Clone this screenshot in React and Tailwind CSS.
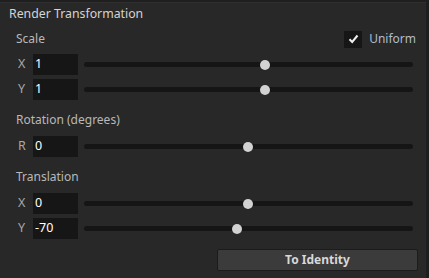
import React from "react";

function Slider({ pos }) {
  return (
    <div className="relative ml-[6px] mr-[16px] h-[21px] flex-1">
      <div className="absolute left-0 right-0 top-[8px] h-[5px] rounded-full bg-[#151515]" />
      <div
        className="absolute top-[6px] h-[10px] w-[10px] -translate-x-1/2 rounded-full bg-[#d2d2d2]"
        style={{ left: `${pos}px` }}
      />
    </div>
  );
}

function Row({ label, value, pos }) {
  return (
    <div className="flex h-[21px] items-center">
      <span className="w-[33px] pl-[18px] text-[12.5px] text-[#a8a8a8]">{label}</span>
      <div className="flex h-[21px] w-[45px] items-center bg-[#161616] pl-[2px] text-[12.5px] text-white">{value}</div>
      <Slider pos={pos} />
    </div>
  );
}

export default function App() {
  return (
    <div
      className="relative h-[278px] w-[429px] overflow-hidden bg-[#282828] text-[#c8c8c8]"
      style={{ fontFamily: "'Noto Sans', 'Open Sans', sans-serif" }}
    >
      <div className="h-[3px] border-b border-[#2f2f2f] bg-[#1f1f1f]" />
      <div className="absolute right-0 top-0 h-full w-[3px] bg-[#1e1e1e]" />

      <div className="pl-[9px] pt-[2px] text-[12.3px] leading-[18px] text-[#d4d4d4]">Render Transformation</div>

      <div className="mt-[7px] flex h-[18px] items-center justify-between pl-[16px] pr-[13px]">
        <span className="text-[12px] text-[#b8b8b8]">Scale</span>
        <div className="flex items-center gap-[7px]">
          <div className="flex h-[17px] w-[18px] items-center justify-center bg-[#161616]">
            <svg width="11" height="10" viewBox="0 0 11 10">
              <path d="M1.5 5.2 L4.2 8 L9.5 1.5" fill="none" stroke="#f0f0f0" strokeWidth="2" />
            </svg>
          </div>
          <span className="text-[12px] text-[#b0bcc8]">Uniform</span>
        </div>
      </div>

      <div className="mt-[6px] flex flex-col gap-[4px]">
        <Row label="X" value="1" pos={181} />
        <Row label="Y" value="1" pos={181} />
      </div>

      <div className="mt-[11px] flex h-[18px] items-center pl-[16px] text-[12px] text-[#b8b8b8]">Rotation (degrees)</div>
      <div className="mt-[7px]">
        <Row label="R" value="0" pos={164} />
      </div>

      <div className="mt-[11px] flex h-[18px] items-center pl-[16px] text-[12px] text-[#b8b8b8]">Translation</div>
      <div className="mt-[7px] flex flex-col gap-[4px]">
        <Row label="X" value="0" pos={164} />
        <Row label="Y" value="-70" pos={153} />
      </div>

      <div className="mt-[10px] flex justify-end pr-[11px]">
        <button className="flex h-[22px] w-[201px] items-center justify-center rounded-[2px] border border-[#1c1c1c] bg-[#3b3b3b] text-[12px] font-bold text-[#d8d8d8]">
          To Identity
        </button>
      </div>
    </div>
  );
}
